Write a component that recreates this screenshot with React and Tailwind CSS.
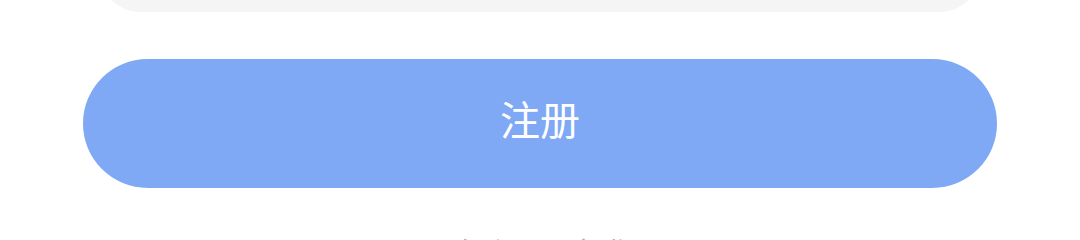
import React from "react";

export default function App() {
  return (
    <div className="h-[240px] w-full overflow-hidden bg-white font-['Noto_Sans_CJK_SC','Noto_Sans',sans-serif]">
      {/* tail of the form card above */}
      <div className="mx-[100px] -mt-[88px] h-[100px] rounded-[40px] bg-[#f5f5f5]" />

      <button
        type="button"
        className="mx-[83px] mt-[47px] flex h-[129px] w-[914px] items-center justify-center rounded-full bg-[#7fa8f5] pb-[12px] text-[40px] font-normal text-white"
      >
        注册
      </button>

      <p className="mt-[42px] text-center text-[29px] leading-[43px] text-[#aaaaaa]">
        已有账号？去登录
      </p>
    </div>
  );
}
